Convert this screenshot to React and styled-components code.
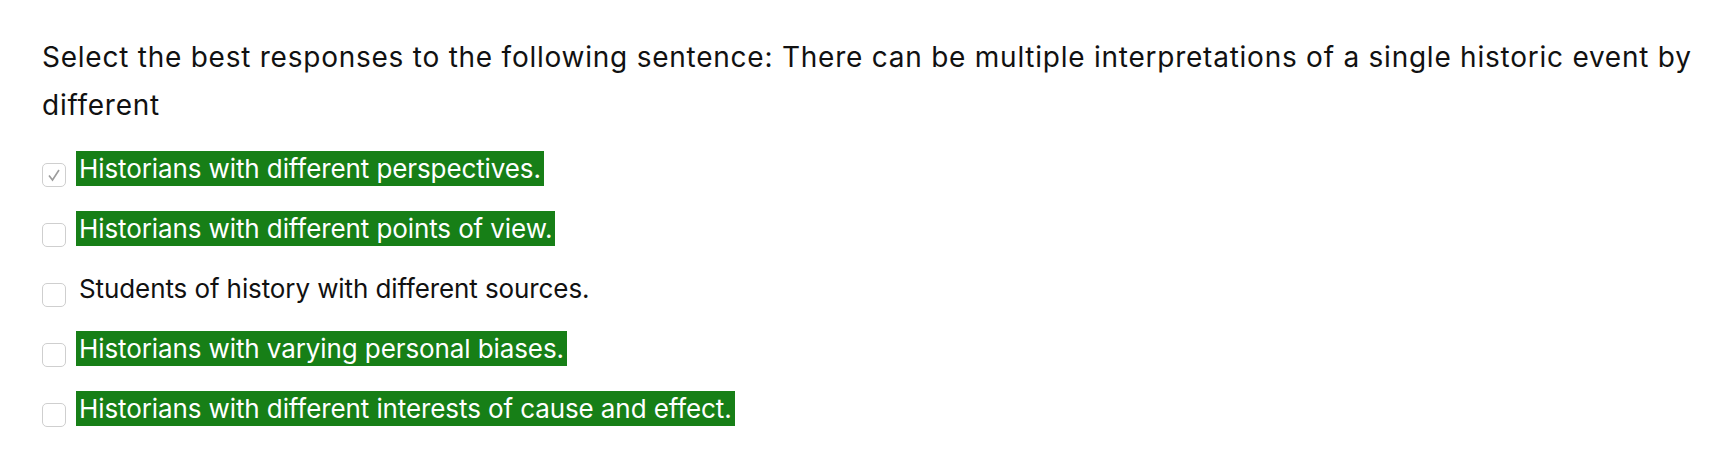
import React from "react";
import styled, { createGlobalStyle } from "styled-components";

const GlobalStyle = createGlobalStyle`
  html, body {
    margin: 0;
    padding: 0;
    background: #ffffff;
  }
  body {
    font-family: Inter, "Liberation Sans", sans-serif;
    color: #111;
  }
`;

const options = [
  { text: "Historians with different perspectives.", correct: true, checked: true },
  { text: "Historians with different points of view.", correct: true },
  { text: "Students of history with different sources.", correct: false },
  { text: "Historians with varying personal biases.", correct: true },
  { text: "Historians with different interests of cause and effect.", correct: true },
];

const App = () => {
  return (
    <>
      <GlobalStyle />
      <Page>
        <Question>
          Select the best responses to the following sentence: There can be multiple interpretations of a single
          historic event by different
        </Question>
        <OptionList>
          {options.map((o) => (
            <Option key={o.text}>
              <Box>
                {o.checked && (
                  <svg width="16" height="16" viewBox="0 0 16 16">
                    <polyline points="3,8.5 6.5,13 13,3" fill="none" stroke="#9c9c9c" strokeWidth="1.6" />
                  </svg>
                )}
              </Box>
              <LabelLine>
                <Label $correct={o.correct}>{o.text}</Label>
              </LabelLine>
            </Option>
          ))}
        </OptionList>
      </Page>
    </>
  );
};

const Page = styled.div`
  padding: 33px 10px 0 42px;
`;

const Question = styled.p`
  margin: 0;
  font-size: 28px;
  line-height: 48px;
  letter-spacing: 0.76px;
  max-width: 1675px;
`;

const OptionList = styled.div`
  margin-top: 10px;
  display: flex;
  flex-direction: column;
`;

const Option = styled.div`
  display: flex;
  align-items: flex-start;
  height: 60px;
`;

const Box = styled.span`
  box-sizing: border-box;
  width: 24px;
  height: 24px;
  margin-top: 24px;
  margin-right: 10px;
  border: 1px solid #cfcfcf;
  border-radius: 5px;
  background: #fff;
  display: flex;
  align-items: center;
  justify-content: center;
  flex-shrink: 0;
`;

const LabelLine = styled.div`
  font-size: 26px;
  line-height: 60px;
  white-space: nowrap;
`;

const Label = styled.span`
  letter-spacing: -0.1px;
  ${(p) =>
    p.$correct
      ? `
    color: #fff;
    background: #177f17;
    padding: 2px 3px;
  `
      : `
    color: #111;
    padding: 0 3px;
  `}
`;

export default App;
